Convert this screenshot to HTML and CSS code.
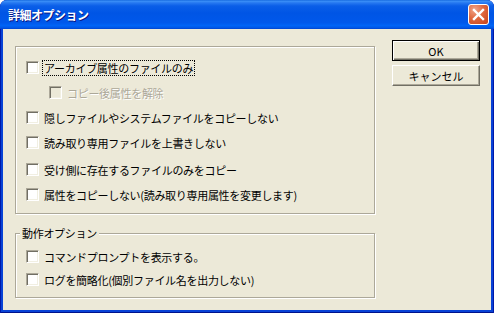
FILE: index.html
```html
<!DOCTYPE html>
<html lang="ja">
<head>
  <meta charset="UTF-8">
  <title>詳細オプション</title>
  <link rel="stylesheet" href="styles.css">
</head>
<body>
  <div class="window">
    <div class="titlebar">
      <span class="title">詳細オプション</span>
      <span class="close">
        <svg width="13" height="13" viewBox="0 0 13 13">
          <path d="M2 2 L11 11 M11 2 L2 11" stroke="#fff" stroke-width="2.4" stroke-linecap="square"/>
        </svg>
      </span>
    </div>

    <div class="client">
      <div class="options">
        <!-- main attribute options -->
        <fieldset class="group group-main">
          <label class="check"><span class="box"></span><span class="text focus">アーカイブ属性のファイルのみ</span></label>
          <label class="check sub disabled"><span class="box"></span><span class="text">コピー後属性を解除</span></label>
          <label class="check"><span class="box"></span><span class="text">隠しファイルやシステムファイルをコピーしない</span></label>
          <label class="check"><span class="box"></span><span class="text">読み取り専用ファイルを上書きしない</span></label>
          <label class="check row-gap"><span class="box"></span><span class="text">受け側に存在するファイルのみをコピー</span></label>
          <label class="check"><span class="box"></span><span class="text">属性をコピーしない(読み取り専用属性を変更します)</span></label>
        </fieldset>

        <!-- behaviour options -->
        <fieldset class="group group-action">
          <legend>動作オプション</legend>
          <div class="rows">
            <label class="check"><span class="box"></span><span class="text">コマンドプロンプトを表示する。</span></label>
            <label class="check"><span class="box"></span><span class="text">ログを簡略化(個別ファイル名を出力しない)</span></label>
          </div>
        </fieldset>
      </div>

      <div class="buttons">
        <button type="button" class="btn default">OK</button>
        <button type="button" class="btn">キャンセル</button>
      </div>
    </div>
  </div>
</body>
</html>
```

FILE: styles.css
```css
*, *::before, *::after {
  box-sizing: border-box;
}
body {
  margin: 0;
  background: #fff;
  font-family: "Noto Sans CJK JP", "Noto Sans", sans-serif;
  font-size: 11px;
  color: #000;
}
.window {
  width: 494px;
  height: 313px;
  display: flex;
  flex-direction: column;
  background: #0842d6;
  border-radius: 7px 7px 0 0;
  box-shadow: inset 1px 0 #0019a8, inset -1px 0 #0019a8, inset 0 -1px #00138c;
  overflow: hidden;
}
/* XP style caption */
.titlebar {
  height: 29px;
  display: flex;
  align-items: center;
  justify-content: space-between;
  padding: 0 5px 0 8px;
  background: linear-gradient(to bottom,
    #0a5dd8 0, #3d92f8 1px, #2577f0 3px, #0a5ee8 6px,
    #0055e5 45%, #0058eb 78%, #0064f6 88%, #0058e8 95%, #0043cf 100%);
}
.title {
  color: #fff;
  font-weight: bold;
  font-size: 12px;
  letter-spacing: -0.5px;
  text-shadow: 1px 1px #0a1883;
}
.close {
  width: 21px;
  height: 21px;
  display: flex;
  align-items: center;
  justify-content: center;
  border: 1px solid #fff;
  border-radius: 3px;
  background: radial-gradient(circle at 30% 25%, #f0a58a 0, #e0683f 45%, #c4421b 100%);
}
.client {
  flex: 1;
  margin: 0 3px 3px 3px;
  background: #ece9d8;
  display: flex;
  gap: 17px;
  padding: 11px 11px 0 12px;
}
.options {
  margin-top: 6px;
  width: 360px;
}
.group {
  margin: 0;
  padding: 0;
  border: 1px solid #aca899;
  box-shadow: 1px 1px 0 #fff, inset 1px 1px 0 #fff;
}
.group-main {
  height: 168px;
  padding: 8px 0 0 10px;
}
.group-action {
  margin-top: 12px;
  padding-bottom: 6px;
}
.group-action legend {
  margin-left: 4px;
  padding: 0 2px;
  line-height: 14px;
  letter-spacing: -0.3px;
  background: #ece9d8;
}
.rows {
  padding: 5px 0 0 10px;
}
.check {
  height: 25px;
  display: flex;
  align-items: center;
  gap: 5px;
}
.check.row-gap {
  height: 27px;
  padding-top: 2px;
}
.group-action .check {
  height: 23px;
}
.check.sub {
  padding-left: 23px;
}
/* classic sunken checkbox */
.box {
  width: 13px;
  height: 13px;
  flex: none;
  background: #fff;
  border: 1px solid;
  border-color: #aca899 #fff #fff #aca899;
  box-shadow: inset 1px 1px #716f64, inset -1px -1px #f1efe2;
}
.text {
  line-height: 14px;
  white-space: nowrap;
  letter-spacing: -0.3px;
}
.text.focus {
  outline: 1px dotted #000;
  padding: 0 1px;
  margin-left: -1px;
}
.disabled .box {
  background: #ece9d8;
}
.disabled .text {
  color: #aca899;
  text-shadow: 1px 1px #fff;
}
.buttons {
  display: flex;
  flex-direction: column;
  gap: 4px;
}
.btn {
  width: 88px;
  height: 21px;
  padding: 0;
  font: inherit;
  color: #000;
  background: #ece9d8;
  border: 1px solid;
  border-color: #fff #716f64 #716f64 #fff;
  box-shadow: inset -1px -1px #aca899;
}
.btn.default {
  border-color: #000;
  box-shadow: inset 1px 1px #fff, inset -1px -1px #716f64, inset -2px -2px #aca899;
}
```
